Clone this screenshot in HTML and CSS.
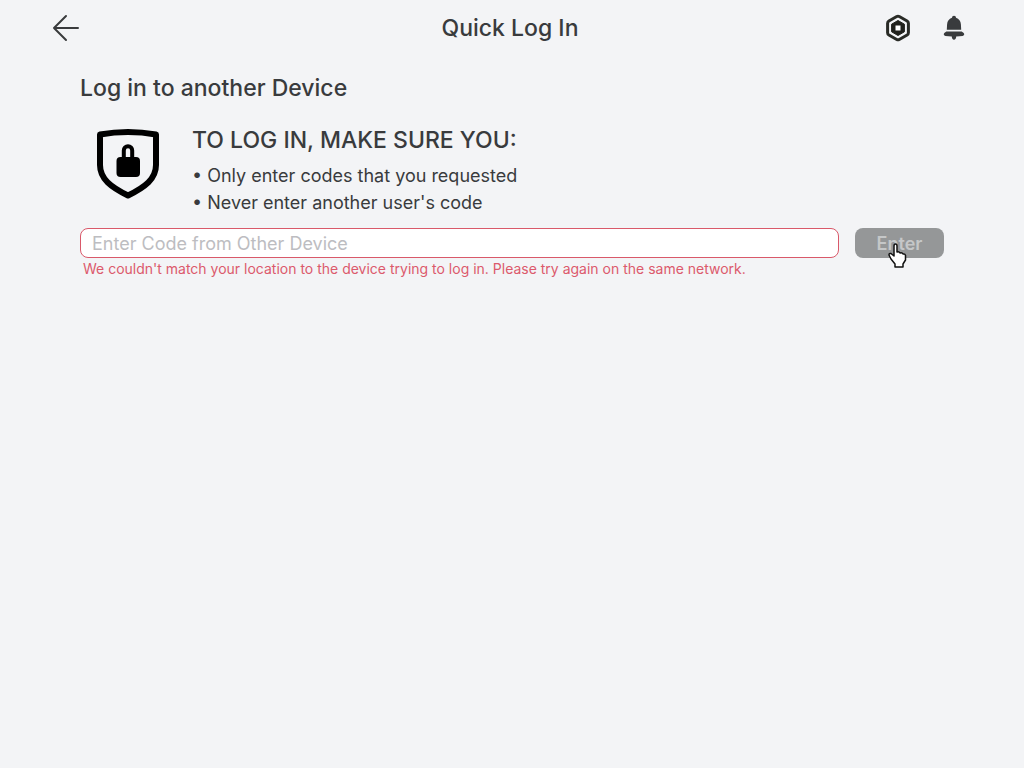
FILE: index.html
```html
<!DOCTYPE html>
<html lang="en">
<head>
    <meta charset="UTF-8">
    <meta name="viewport" content="width=device-width, initial-scale=1.0">
    <title>Quick Log In</title>
    <link rel="stylesheet" href="styles.css">
</head>
<body>
    <header class="topbar">
        <button type="button" class="icon-button" aria-label="Back">
            <svg width="28" height="28" viewBox="0 0 28 28" fill="none" stroke="#393b3d" stroke-width="2" stroke-linecap="round" stroke-linejoin="round">
                <path d="M26 14H2M14 2L2 14l12 12"/>
            </svg>
        </button>
        <h1>Quick Log In</h1>
        <div class="actions">
            <button type="button" class="icon-button" aria-label="Robux">
                <svg width="28" height="28" viewBox="0 0 28 28">
                    <path d="M12.700 2.500q1.300-.7 2.600 0l7.800 4.500q1.300.8 1.300 2.300v9.400q0 1.500-1.300 2.300l-7.800 4.500q-1.300.7-2.600 0L4.900 21q-1.300-.8-1.300-2.300V9.300q0-1.500 1.300-2.300z" fill="none" stroke="#292b26" stroke-width="3"/>
                    <path d="M14 6.500l6.400 3.700v7.600L14 21.500l-6.400-3.700v-7.600z" fill="#20211c" stroke="#20211c" stroke-width="1" stroke-linejoin="round"/>
                    <path d="M11.500 11.500h5v5h-5z" fill="#fff"/>
                </svg>
            </button>
            <button type="button" class="icon-button" aria-label="Notifications">
                <svg width="28" height="28" viewBox="0 0 28 28" fill="#393b3d">
                    <path d="M14 1.800c1.200 0 2 .8 2 1.900 3 .9 4.700 3.400 4.900 6.600l.3 5.400H6.800l.3-5.400c.2-3.200 1.900-5.700 4.900-6.600 0-1.100.8-1.900 2-1.900z"/>
                    <path d="M6.300 17.400h15.400l2 1.700c1.100 1.100.4 2.800-1.100 2.800l-6.400.6c0 2-.8 3.200-2.200 3.200s-2.200-1.200-2.200-3.200l-6.400-.6c-1.500 0-2.200-1.700-1.100-2.800z"/>
                </svg>
            </button>
        </div>
    </header>

    <main class="content">
        <h2>Log in to another Device</h2>
        <section class="notice">
            <svg class="shield" width="64" height="72" viewBox="0 0 64 72">
                <path d="M4 6.500Q32 1.500 60 6.500V37c0 14-11 22-28 30.500C15 59 4 51 4 37z" fill="none" stroke="#000" stroke-width="6" stroke-linejoin="round"/>
                <rect x="20.500" y="29" width="23.500" height="20" rx="4"/>
                <path d="M27.800 32v-9.500a4.200 4.200 0 0 1 8.400 0V32" fill="none" stroke="#000" stroke-width="4"/>
            </svg>
            <div>
                <h3>TO LOG IN, MAKE SURE YOU:</h3>
                <ul>
                    <li>Only enter codes that you requested</li>
                    <li>Never enter another user's code</li>
                </ul>
            </div>
        </section>
        <form id="codeForm">
            <input type="text" id="code" placeholder="Enter Code from Other Device" aria-label="Enter Code from Other Device" aria-describedby="codeError" aria-invalid="true">
            <div class="submit">
                <button type="submit">Enter</button>
                <svg class="cursor" width="20" height="26" viewBox="0 0 20 26">
                    <path d="M7 24v-3L3 16l-2-4q0-2 2-1.500l3 2.500V3q0-2 1.500-2T9 3v6q2-1 3 1 2-1 3 1 2-.5 2.500 1.500V17L15 21v3z" fill="#fff" stroke="#111" stroke-width="1.500" stroke-linejoin="round"/>
                </svg>
            </div>
        </form>
        <p id="codeError" class="error">We couldn't match your location to the device trying to log in. Please try again on the same network.</p>
    </main>

    <script>
        document.getElementById('codeForm').addEventListener('submit', function(e) {
            e.preventDefault();
        });
    </script>
</body>
</html>
```
FILE: styles.css
```css
body {
    margin: 0;
    min-height: 100vh;
    background: #f3f4f6;
    color: #393b3d;
    font-family: Inter, "Liberation Sans", sans-serif;
}
h1, h2, h3, ul, p {
    margin: 0;
}
h1, h2, h3 {
    font-size: 23px;
    font-weight: 500;
    line-height: 32px;
}
.topbar {
    display: grid;
    grid-template-columns: 1fr auto 1fr;
    align-items: center;
    height: 56px;
    padding: 0 56px 0 52px;
}
.icon-button {
    display: block;
    width: 28px;
    height: 28px;
    padding: 0;
    border: none;
    background: none;
    cursor: pointer;
}
.icon-button svg {
    display: block;
}
.actions {
    display: flex;
    gap: 28px;
    justify-self: end;
}
.content {
    padding: 16px 80px;
}
.notice {
    display: flex;
    gap: 32px;
    padding: 20px 16px 12px;
}
.shield {
    flex: none;
    margin-top: 4px;
}
ul {
    padding: 6px 0 0;
    list-style: none;
    font-size: 18px;
    line-height: 27px;
}
li::before {
    content: "• ";
}
form {
    display: flex;
    gap: 16px;
}
input {
    flex: 1;
    min-width: 0;
    box-sizing: border-box;
    height: 30px;
    padding: 0 11px;
    border: 1px solid #d9596a;
    border-radius: 8px;
    background: #fff;
    color: #393b3d;
    font: 18px Inter, "Liberation Sans", sans-serif;
}
input::placeholder {
    color: #bdbdc1;
    opacity: 1;
}
.submit {
    position: relative;
}
.submit button {
    display: block;
    width: 89px;
    height: 30px;
    padding: 0;
    border: none;
    border-radius: 8px;
    background: #959798;
    color: #c5c7c8;
    font: 600 18px Inter, "Liberation Sans", sans-serif;
}
.cursor {
    position: absolute;
    top: 15px;
    left: 33px;
    pointer-events: none;
}
.error {
    padding: 1px 3px;
    color: #dc5a6c;
    font-size: 14px;
    line-height: 20px;
}
```
